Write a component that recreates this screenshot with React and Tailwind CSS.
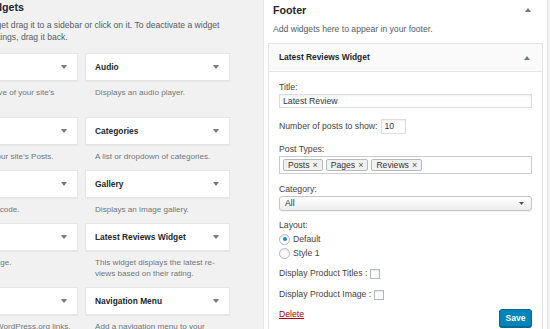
import React from "react";

const rows = [
  { t: "Archives", d: ["A monthly archive of your site\u2019s", "Posts."] },
  { t: "Audio", d: ["Displays an audio player."] },
  { t: "Calendar", d: ["A calendar of your site\u2019s Posts."] },
  { t: "Categories", d: ["A list or dropdown of categories."] },
  { t: "Custom HTML", d: ["Arbitrary HTML code."] },
  { t: "Gallery", d: ["Displays an image gallery."] },
  { t: "Image", d: ["Displays an image."] },
  { t: "Latest Reviews Widget", d: ["This widget displays the latest re-", "views based on their rating."] },
  { t: "Meta", d: ["Login, RSS, & WordPress.org links."] },
  { t: "Navigation Menu", d: ["Add a navigation menu to your", "sidebar."] },
];

function Down() {
  return (
    <svg width="6" height="4" viewBox="0 0 6 4" className="shrink-0">
      <polygon points="0,0 6,0 3,4" fill="#72777c" />
    </svg>
  );
}

function Up() {
  return (
    <svg width="6" height="4" viewBox="0 0 6 4" className="shrink-0">
      <polygon points="0,4 6,4 3,0" fill="#72777c" />
    </svg>
  );
}

function Widget({ t, d }) {
  return (
    <div className="pb-[8px]">
      <div className="h-[28px] bg-white border border-[#e5e5e5] shadow-[0_1px_1px_rgba(0,0,0,0.04)] flex items-center justify-between pl-[9px] pr-[10px]">
        <span className="text-[8.4px] font-bold text-[#23282d] leading-none">{t}</span>
        <Down />
      </div>
      <p className="mt-[6px] px-[10px] text-[8.1px] leading-[11px] text-[#72777c] whitespace-nowrap">
        {d.map((line, i) => (
          <span key={i} className="block">{line}</span>
        ))}
      </p>
    </div>
  );
}

function Tag({ children }) {
  return (
    <span className="h-[12px] flex items-center gap-[3px] px-[4px] bg-[#f1f1f1] border border-[#b9b9b9] rounded-[2px] text-[8.6px] text-[#333] leading-none">
      {children}
      <span className="text-[#555] text-[9px]">×</span>
    </span>
  );
}

export default function App() {
  return (
    <div className="w-[550px] h-[329px] overflow-hidden bg-[#f1f1f1] flex font-['Liberation_Sans',Arial,sans-serif]">
      {/* Left: available widgets */}
      <div className="-ml-[67px] w-[297px] shrink-0">
        <h2 className="text-[10.7px] font-bold leading-[14px] text-[#23282d]">Available Widgets</h2>
        <p className="mt-[5px] text-[8.6px] leading-[12px] text-[#555d66] whitespace-nowrap">
          <span className="block">To activate a widget drag it to a sidebar or click on it. To deactivate a widget</span>
          <span className="block">and delete its settings, drag it back.</span>
        </p>
        <div className="mt-[10px] grid grid-cols-[145px_145px] gap-x-[7px]">
          {rows.map((w) => (
            <Widget key={w.t} t={w.t} d={w.d} />
          ))}
        </div>
      </div>

      {/* Right: footer sidebar */}
      <div className="ml-[33px] w-[285px] h-[345px] shrink-0 bg-white border-x border-b border-[#e5e5e5]">
        <div className="pl-[9px] pr-[16px] pt-[3px] flex items-center justify-between">
          <h2 className="text-[10.7px] font-bold leading-[14px] text-[#23282d]">Footer</h2>
          <Up />
        </div>
        <p className="mt-[6px] px-[9px] text-[8.6px] leading-[12px] text-[#555d66]">
          Add widgets here to appear in your footer.
        </p>

        <div className="mt-[8px] mx-[4px] border border-[#e5e5e5] shadow-[0_1px_1px_rgba(0,0,0,0.04)] pb-[12px]">
          <div className="h-[28px] bg-[#fafafa] border-b border-[#e5e5e5] flex items-center justify-between pl-[10px] pr-[12px]">
            <span className="text-[8.4px] font-bold text-[#23282d] leading-none">Latest Reviews Widget</span>
            <Up />
          </div>

          <div className="px-[10px] pt-[10px] text-[8.7px] text-[#444] flex flex-col">
            <label className="leading-[11px]">Title:</label>
            <div className="mt-[1px] h-[14px] border border-[#ddd] shadow-[inset_0_1px_2px_rgba(0,0,0,0.07)] bg-white flex items-center pl-[3px] text-[#32373c] leading-none">
              Latest Review
            </div>

            <div className="mt-[11px] h-[15px] flex items-center">
              <span className="leading-[11px]">Number of posts to show:</span>
              <span className="ml-[3px] w-[25px] h-[15px] border border-[#ddd] shadow-[inset_0_1px_2px_rgba(0,0,0,0.07)] bg-white flex items-center pl-[3px] text-[#32373c] leading-none">
                10
              </span>
            </div>

            <label className="mt-[10px] leading-[11px]">Post Types:</label>
            <div className="mt-[1px] h-[18px] border border-[#ccc] bg-white flex items-center pl-[3px] gap-[3px]">
              <Tag>Posts</Tag>
              <Tag>Pages</Tag>
              <Tag>Reviews</Tag>
            </div>

            <label className="mt-[10px] leading-[11px]">Category:</label>
            <div className="mt-[1px] h-[15px] border border-[#c6c6c6] rounded-[3px] bg-linear-to-b from-white to-[#ececec] shadow-[0_1px_0_rgba(0,0,0,0.05)] flex items-center justify-between pl-[5px] pr-[7px] text-[#333] leading-none">
              <span>All</span>
              <svg width="5" height="3" viewBox="0 0 5 3">
                <polygon points="0,0 5,0 2.5,3" fill="#555" />
              </svg>
            </div>

            <label className="mt-[9px] leading-[11px]">Layout:</label>
            <div className="mt-[1px] h-[14px] flex items-center gap-[3px]">
              <span className="w-[11px] h-[11px] rounded-full border border-[#b4b9be] bg-white flex items-center justify-center shadow-[inset_0_1px_2px_rgba(0,0,0,0.1)]">
                <span className="w-[4px] h-[4px] rounded-full bg-[#1e8cbe]" />
              </span>
              <span className="leading-none">Default</span>
            </div>
            <div className="h-[14px] flex items-center gap-[3px]">
              <span className="w-[11px] h-[11px] rounded-full border border-[#b4b9be] bg-white shadow-[inset_0_1px_2px_rgba(0,0,0,0.1)]" />
              <span className="leading-none">Style 1</span>
            </div>

            <div className="mt-[8px] h-[11px] flex items-center">
              <span className="leading-none">Display Product Titles :</span>
              <span className="ml-[3px] w-[10px] h-[10px] border border-[#b4b9be] bg-white shadow-[inset_0_1px_2px_rgba(0,0,0,0.1)]" />
            </div>
            <div className="mt-[10px] h-[11px] flex items-center">
              <span className="leading-none">Display Product Image :</span>
              <span className="ml-[3px] w-[10px] h-[10px] border border-[#b4b9be] bg-white shadow-[inset_0_1px_2px_rgba(0,0,0,0.1)]" />
            </div>

            <div className="mt-[9px] flex items-start justify-between">
              <span className="leading-[11px] text-[#a00] underline">Delete</span>
              <span className="h-[18px] w-[33px] justify-center flex items-center bg-[#0085ba] border border-[#006799] rounded-[3px] text-white text-[8.6px] font-bold leading-none shadow-[0_1px_0_#006799]">
                Save
              </span>
            </div>
          </div>
        </div>
      </div>
    </div>
  );
}
